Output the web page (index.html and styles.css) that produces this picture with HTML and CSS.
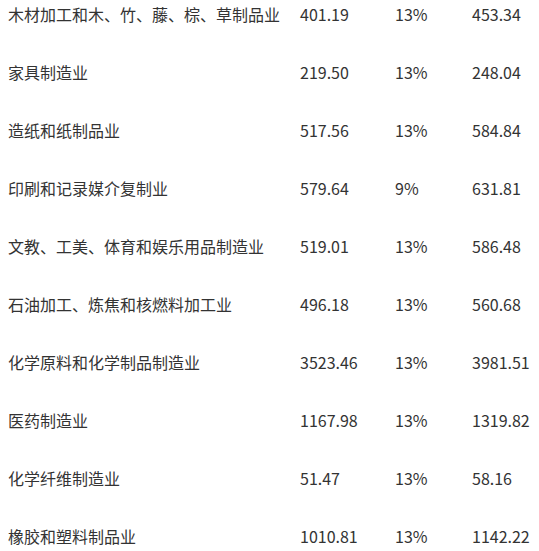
FILE: index.html
```html
<!DOCTYPE html>
<html lang="zh">
<head>
<meta charset="utf-8">
<link rel="stylesheet" href="styles.css">
</head>
<body>
<table class="data">
<colgroup><col class="c1"><col class="c2"><col class="c3"><col class="c4"></colgroup>
<tbody>
<tr><td>木材加工和木、竹、藤、棕、草制品业</td><td>401.19</td><td>13%</td><td>453.34</td></tr>
<tr><td>家具制造业</td><td>219.50</td><td>13%</td><td>248.04</td></tr>
<tr><td>造纸和纸制品业</td><td>517.56</td><td>13%</td><td>584.84</td></tr>
<tr><td>印刷和记录媒介复制业</td><td>579.64</td><td>9%</td><td>631.81</td></tr>
<tr><td>文教、工美、体育和娱乐用品制造业</td><td>519.01</td><td>13%</td><td>586.48</td></tr>
<tr><td>石油加工、炼焦和核燃料加工业</td><td>496.18</td><td>13%</td><td>560.68</td></tr>
<tr><td>化学原料和化学制品制造业</td><td>3523.46</td><td>13%</td><td>3981.51</td></tr>
<tr><td>医药制造业</td><td>1167.98</td><td>13%</td><td>1319.82</td></tr>
<tr><td>化学纤维制造业</td><td>51.47</td><td>13%</td><td>58.16</td></tr>
<tr><td>橡胶和塑料制品业</td><td>1010.81</td><td>13%</td><td>1142.22</td></tr>
</tbody>
</table>
</body>
</html>
```
FILE: styles.css
```css
html, body { margin: 0; padding: 0; background: #fff; overflow: hidden; }
.data {
  border-collapse: collapse;
  table-layout: fixed;
  width: 539px;
  margin-top: -15px;
  font-family: "Noto Sans CJK SC", sans-serif;
  font-size: 16px;
  color: #333;
}
.c1 { width: 292px; }
.c2 { width: 95px; }
.c3 { width: 77px; }
.c4 { width: 75px; }
.data td {
  height: 58px;
  padding: 0 0 0 8px;
  line-height: 22px;
  vertical-align: middle;
  white-space: nowrap;
  box-sizing: border-box;
}
```
